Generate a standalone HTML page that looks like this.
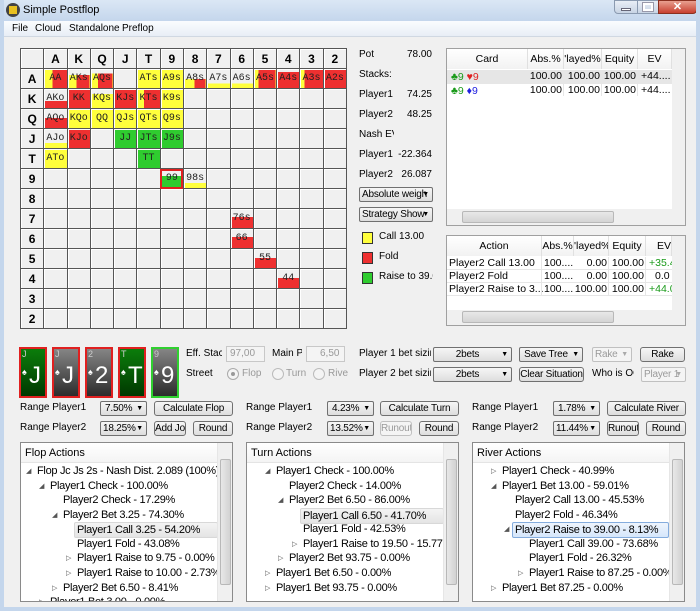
<!DOCTYPE html>
<html><head><meta charset="utf-8"><style>
*{box-sizing:border-box;margin:0;padding:0;white-space:nowrap}
body{width:700px;height:611px;overflow:hidden;background:#f0f0f0;font-family:"Liberation Sans",sans-serif;font-size:10px;color:#000;position:relative}
.a{position:absolute;white-space:nowrap}
.title{left:0;top:0;width:700px;height:21px;background:linear-gradient(#dbe7f5,#c4d6ec);}
.frame{left:0;top:0;width:700px;height:611px;border:4px solid #c4d6ec;border-top:none;}
.menu{left:4px;top:21px;width:692px;height:16px;background:linear-gradient(#fafcfe,#e8eef6);border-bottom:1px solid #d0d8e2}
table.g{position:absolute;left:20px;top:48px;width:327px;height:281px;border-collapse:collapse;table-layout:fixed;background:#f0f0f0}
table.g td{border:1px solid #555;box-shadow:inset 1px 1px 0 #fff;height:20px;text-align:center;font-family:"Liberation Mono",monospace;font-size:10px;color:#222;padding:0;overflow:hidden;white-space:nowrap}
table.g tr:first-child td,table.g td:first-child{font-family:"Liberation Sans",sans-serif;font-weight:bold;font-size:12px;color:#000}
.Y{background:#ffff3c}.R{background:#ee3030}.G{background:#2fcc2f}
.btn{position:absolute;height:15px;border:1px solid #707070;border-radius:3px;background:linear-gradient(#f6f6f6,#dddddd);text-align:center;line-height:13px;font-size:10px;overflow:hidden;letter-spacing:-0.2px}
.cmb{position:absolute;height:15px;border:1px solid #707070;border-radius:2px;background:linear-gradient(#f6f6f6,#dddddd);font-size:10px;line-height:13px;text-align:center;overflow:hidden;padding-right:10px;letter-spacing:-0.2px}
.cmb:after{content:"▼";position:absolute;right:3px;top:0;font-size:7px;color:#000}
.dis{color:#9a9a9a;border-color:#c0c0c0;background:#f4f4f4}
.dis:after{color:#aaa}
.tbl{position:absolute;background:#fff;border:1px solid #a0a0a0;overflow:hidden}
.hd{position:absolute;top:0;height:20px;line-height:20px;text-align:center;border-right:1px solid #e0e0e0;background:linear-gradient(#fff,#f2f2f2);font-size:10.5px;overflow:hidden}
.c{position:absolute;font-size:10.5px;text-align:right;overflow:hidden;border-right:1px solid #e6e6e6;padding-right:1px}
.t1{position:absolute;font-size:10.5px}
.card{position:absolute;top:347px;width:28px;height:51px;border:2px solid #e02020;color:#fff;overflow:hidden}
.card .s{position:absolute;left:1px;top:0;font-size:9px;color:#ccc}
.card .p{position:absolute;left:1px;top:18px;font-size:9px}
.card .b{position:absolute;left:8px;top:13px;font-size:24px;line-height:28px;font-family:"Liberation Sans",sans-serif}
.cg{background:linear-gradient(#0b7d0b,#003800)}
.cx{background:linear-gradient(#858585,#2c2c2c)}
.panel{position:absolute;top:442px;width:213px;height:160px;border:1px solid #8a8a8a;background:#fff;overflow:hidden}
.panel .h{position:absolute;left:0;top:0;width:198px;height:20px;line-height:20px;padding-left:4px;font-size:11px;border-bottom:1px solid #e4e4e4;background:linear-gradient(#fff,#f4f4f4)}
.sb{position:absolute;right:0;top:0;width:15px;height:158px;background:#f0f0f0;border-left:1px solid #e6e6e6}
.sb .t{position:absolute;left:2px;top:16px;width:11px;height:126px;border:1px solid #b8b8b8;border-radius:2px;background:linear-gradient(to right,#e8e8e8,#d2d2d2)}
.r{position:absolute;font-size:11px;line-height:14px;white-space:nowrap;letter-spacing:-0.3px}
.r i{font-style:normal;font-size:7px;color:#555;position:absolute;left:-11px;top:1px}
.sel{background:linear-gradient(#f4f4f4,#e4e4e4);border:1px solid #d8d8d8;border-radius:2px;padding:0 2px;margin-left:-3px}
.selb{background:linear-gradient(#eef5fd,#d6e7fb);border:1px solid #84acdd;border-radius:2px;padding:0 2px;margin-left:-3px}
</style></head><body>
<div class="a title"></div>
<div class="a" style="left:6px;top:3px;width:14px;height:14px;border-radius:7px;background:#444"></div>
<div class="a" style="left:9px;top:6px;width:8px;height:8px;background:#e8c020"></div>
<div class="a" style="left:23px;top:4px;font-size:11px">Simple Postflop</div>
<div class="a" style="left:614px;top:0;width:24px;height:14px;border:1px solid #8a9ab0;border-radius:0 0 0 4px;background:linear-gradient(#e8eef6,#c8d4e4)"></div>
<div class="a" style="left:621px;top:8px;width:10px;height:3px;background:#fff;border:1px solid #667"></div>
<div class="a" style="left:637px;top:0;width:22px;height:14px;border:1px solid #8a9ab0;background:linear-gradient(#e8eef6,#c8d4e4)"></div>
<div class="a" style="left:643px;top:3px;width:10px;height:8px;border:2px solid #fff;outline:1px solid #99a"></div>
<div class="a" style="left:658px;top:0;width:39px;height:14px;border:1px solid #8a3020;border-radius:0 0 4px 0;background:linear-gradient(#e8a090,#c84030);color:#fff;font-weight:bold;text-align:center;font-size:11px;line-height:13px">✕</div>
<div class="a frame"></div>
<div class="a menu"></div>
<div class="a" style="left:12px;top:23px">File</div>
<div class="a" style="left:35px;top:23px">Cloud</div>
<div class="a" style="left:69px;top:23px">Standalone</div>
<div class="a" style="left:122px;top:23px">Preflop</div>

<table class="g">
<tr><td></td><td>A</td><td>K</td><td>Q</td><td>J</td><td>T</td><td>9</td><td>8</td><td>7</td><td>6</td><td>5</td><td>4</td><td>3</td><td>2</td></tr>
<tr><td>A</td><td style="background:linear-gradient(to right,#ffff3c 35%,#ee3030 35%)">AA</td><td style="background:linear-gradient(#f0f0f0 30%,transparent 30%),linear-gradient(to right,#ffff3c 40%,#ee3030 40%)">AKs</td><td style="background:linear-gradient(#f0f0f0 20%,transparent 20%),linear-gradient(to right,#ffff3c 35%,#ee3030 35%)">AQs</td><td></td><td class="Y">ATs</td><td class="Y">A9s</td><td style="background:linear-gradient(#f0f0f0 50%,transparent 50%),linear-gradient(to right,#ffff3c 50%,#ee3030 50%)">A8s</td><td style="background:linear-gradient(#f0f0f0 75%,#ffff3c 75%)">A7s</td><td style="background:linear-gradient(#f0f0f0 75%,#ffff3c 75%)">A6s</td><td style="background:linear-gradient(to right,#ffff3c 22%,#ee3030 22%)">A5s</td><td style="background:linear-gradient(#f0f0f0 12%,#ee3030 12%)">A4s</td><td style="background:linear-gradient(to right,#ffff3c 18%,#ee3030 18%)">A3s</td><td class="R">A2s</td></tr>
<tr><td>K</td><td style="background:linear-gradient(#f0f0f0 60%,#ee3030 60%)">AKo</td><td class="R">KK</td><td style="background:linear-gradient(#f0f0f0 25%,#ffff3c 25%)">KQs</td><td class="R">KJs</td><td style="background:linear-gradient(to right,#ffff3c 28%,#ee3030 28%)">KTs</td><td class="Y">K9s</td><td></td><td></td><td></td><td></td><td></td><td></td><td></td></tr>
<tr><td>Q</td><td style="background:linear-gradient(#f0f0f0 45%,#ee3030 45%)">AQo</td><td class="Y">KQo</td><td class="Y">QQ</td><td class="Y">QJs</td><td class="Y">QTs</td><td class="Y">Q9s</td><td></td><td></td><td></td><td></td><td></td><td></td><td></td></tr>
<tr><td>J</td><td style="background:linear-gradient(#f0f0f0 70%,#ffff3c 70%)">AJo</td><td class="R">KJo</td><td></td><td class="G">JJ</td><td class="G">JTs</td><td class="G">J9s</td><td></td><td></td><td></td><td></td><td></td><td></td><td></td></tr>
<tr><td>T</td><td class="Y">ATo</td><td></td><td></td><td></td><td class="G">TT</td><td></td><td></td><td></td><td></td><td></td><td></td><td></td><td></td></tr>
<tr><td>9</td><td></td><td></td><td></td><td></td><td></td><td style="background:linear-gradient(#f0f0f0 35%,#2fcc2f 35%);outline:2px solid #e02020;outline-offset:-2px">99</td><td style="background:linear-gradient(#f0f0f0 70%,#ffff3c 70%)">98s</td><td></td><td></td><td></td><td></td><td></td><td></td></tr>
<tr><td>8</td><td></td><td></td><td></td><td></td><td></td><td></td><td></td><td></td><td></td><td></td><td></td><td></td><td></td></tr>
<tr><td>7</td><td></td><td></td><td></td><td></td><td></td><td></td><td></td><td></td><td style="background:linear-gradient(#f0f0f0 40%,#ee3030 40%)">76s</td><td></td><td></td><td></td><td></td></tr>
<tr><td>6</td><td></td><td></td><td></td><td></td><td></td><td></td><td></td><td></td><td style="background:linear-gradient(#f0f0f0 40%,#ee3030 40%)">66</td><td></td><td></td><td></td><td></td></tr>
<tr><td>5</td><td></td><td></td><td></td><td></td><td></td><td></td><td></td><td></td><td></td><td style="background:linear-gradient(#f0f0f0 45%,#ee3030 45%)">55</td><td></td><td></td><td></td></tr>
<tr><td>4</td><td></td><td></td><td></td><td></td><td></td><td></td><td></td><td></td><td></td><td></td><td style="background:linear-gradient(#f0f0f0 45%,#ee3030 45%)">44</td><td></td><td></td></tr>
<tr><td>3</td><td></td><td></td><td></td><td></td><td></td><td></td><td></td><td></td><td></td><td></td><td></td><td></td><td></td></tr>
<tr><td>2</td><td></td><td></td><td></td><td></td><td></td><td></td><td></td><td></td><td></td><td></td><td></td><td></td><td></td></tr>
</table>

<!-- stats -->
<div class="a" style="left:359px;top:49px">Pot</div><div class="a" style="left:380px;top:49px;width:52px;text-align:right">78.00</div>
<div class="a" style="left:359px;top:69px">Stacks:</div>
<div class="a" style="left:359px;top:89px">Player1</div><div class="a" style="left:380px;top:89px;width:52px;text-align:right">74.25</div>
<div class="a" style="left:359px;top:109px">Player2</div><div class="a" style="left:380px;top:109px;width:52px;text-align:right">48.25</div>
<div class="a" style="left:359px;top:129px;width:35px;overflow:hidden">Nash EVs</div>
<div class="a" style="left:359px;top:149px">Player1</div><div class="a" style="left:380px;top:149px;width:52px;text-align:right">-22.364</div>
<div class="a" style="left:359px;top:169px">Player2</div><div class="a" style="left:380px;top:169px;width:52px;text-align:right">26.087</div>
<div class="cmb" style="left:359px;top:187px;width:74px;text-align:left;padding-left:2px">Absolute weigh</div>
<div class="cmb" style="left:359px;top:207px;width:74px;text-align:left;padding-left:2px">Strategy Show</div>
<div class="a Y" style="left:362px;top:232px;width:11px;height:12px;border:1px solid #333"></div><div class="a" style="left:379px;top:231px">Call 13.00</div>
<div class="a R" style="left:362px;top:252px;width:11px;height:12px;border:1px solid #333"></div><div class="a" style="left:379px;top:251px">Fold</div>
<div class="a G" style="left:362px;top:272px;width:11px;height:12px;border:1px solid #333"></div><div class="a" style="left:379px;top:271px;width:54px;overflow:hidden">Raise to 39.00</div>

<!-- table 1 -->
<div class="tbl" style="left:446px;top:48px;width:240px;height:178px">
 <div class="hd" style="left:0;width:81px">Card</div>
 <div class="hd" style="left:81px;width:36px">Abs.%</div>
 <div class="hd" style="left:117px;width:38px">'layed%</div>
 <div class="hd" style="left:155px;width:36px">Equity</div>
 <div class="hd" style="left:191px;width:34px">EV</div>
 <div class="a" style="left:0;top:21px;width:225px;height:13px;background:#e6e6e6"></div>
 <div class="a" style="left:0;top:34px;width:225px;height:1px;background:#e6e6e6"></div>
 <div class="a" style="left:4px;top:22px;font-size:10.5px"><span style="color:#1a9a1a">♣9</span> <span style="color:#e02020">♥9</span></div>
 <div class="a" style="left:4px;top:36px;font-size:10.5px"><span style="color:#1a9a1a">♣9</span> <span style="color:#2020e0">♦9</span></div>
 <div class="c" style="left:81px;top:21px;width:36px">100.00</div><div class="c" style="left:117px;top:21px;width:38px">100.00</div><div class="c" style="left:155px;top:21px;width:36px">100.00</div><div class="t1" style="left:194px;top:21px">+44....</div>
 <div class="c" style="left:81px;top:35px;width:36px">100.00</div><div class="c" style="left:117px;top:35px;width:38px">100.00</div><div class="c" style="left:155px;top:35px;width:36px">100.00</div><div class="t1" style="left:194px;top:35px">+44....</div>
 <div class="a" style="left:225px;top:0;width:14px;height:160px;background:#f0f0f0"></div>
 <div class="a" style="left:0;top:160px;width:239px;height:16px;background:#f0f0f0"></div>
 <div class="a" style="left:15px;top:162px;width:152px;height:12px;border:1px solid #b8b8b8;border-radius:2px;background:linear-gradient(#e8e8e8,#d4d4d4)"></div>
</div>
<!-- table 2 -->
<div class="tbl" style="left:446px;top:235px;width:240px;height:91px">
 <div class="hd" style="left:0;width:95px">Action</div>
 <div class="hd" style="left:95px;width:32px">Abs.%</div>
 <div class="hd" style="left:127px;width:35px">'layed%</div>
 <div class="hd" style="left:162px;width:37px">Equity</div>
 <div class="hd" style="left:199px;width:26px;text-align:right">EV</div>
 <div class="t1" style="left:2px;top:21px">Player2 Call 13.00</div>
 <div class="t1" style="left:2px;top:34px">Player2 Fold</div>
 <div class="t1" style="left:2px;top:47px">Player2 Raise to 3...</div>
 <div class="a" style="left:0;top:33px;width:225px;height:1px;background:#e6e6e6"></div>
 <div class="a" style="left:0;top:46px;width:225px;height:1px;background:#e6e6e6"></div>
 <div class="a" style="left:0;top:59px;width:225px;height:1px;background:#e6e6e6"></div>
 <div class="a" style="left:94px;top:20px;width:1px;height:40px;background:#e6e6e6"></div>
 <div class="t1" style="left:97px;top:21px">100....</div><div class="c" style="left:127px;top:21px;width:35px">0.00</div><div class="c" style="left:162px;top:21px;width:37px">100.00</div><div class="t1" style="left:202px;top:21px;color:#1a9a1a;width:23px;overflow:hidden">+35.4</div>
 <div class="t1" style="left:97px;top:34px">100....</div><div class="c" style="left:127px;top:34px;width:35px">0.00</div><div class="c" style="left:162px;top:34px;width:37px">100.00</div><div class="t1" style="left:208px;top:34px;width:17px;overflow:hidden">0.0</div>
 <div class="t1" style="left:97px;top:47px">100....</div><div class="c" style="left:127px;top:47px;width:35px">100.00</div><div class="c" style="left:162px;top:47px;width:37px">100.00</div><div class="t1" style="left:202px;top:47px;color:#1a9a1a;width:23px;overflow:hidden">+44.0</div>
 <div class="a" style="left:225px;top:0;width:14px;height:74px;background:#f0f0f0"></div>
 <div class="a" style="left:0;top:74px;width:239px;height:15px;background:#f0f0f0"></div>
 <div class="a" style="left:15px;top:75px;width:152px;height:12px;border:1px solid #b8b8b8;border-radius:2px;background:linear-gradient(#e8e8e8,#d4d4d4)"></div>
</div>

<!-- cards -->
<div class="card cg" style="left:19px"><span class="s">J</span><span class="p">♠</span><span class="b">J</span></div>
<div class="card cx" style="left:52px"><span class="s">J</span><span class="p">♠</span><span class="b">J</span></div>
<div class="card cx" style="left:85px"><span class="s">2</span><span class="p">♠</span><span class="b">2</span></div>
<div class="card cg" style="left:118px"><span class="s">T</span><span class="p">♠</span><span class="b">T</span></div>
<div class="card cx" style="left:151px;border-color:#30d030"><span class="s">9</span><span class="p">♠</span><span class="b">9</span></div>

<div class="a" style="left:186px;top:348px;width:36px;overflow:hidden">Eff. Stack</div>
<div class="a" style="left:226px;top:346px;width:39px;height:16px;border:1px solid #c8c8c8;background:#f4f4f4;color:#999;padding-left:3px;line-height:14px">97,00</div>
<div class="a" style="left:272px;top:348px;width:30px;overflow:hidden">Main Pot</div>
<div class="a" style="left:306px;top:346px;width:39px;height:16px;border:1px solid #c8c8c8;background:#f4f4f4;color:#999;padding-left:13px;line-height:14px">6,50</div>
<div class="a" style="left:186px;top:368px">Street</div>
<div class="a" style="left:227px;top:368px;width:12px;height:12px;border:1px solid #aaa;border-radius:6px;background:#f4f4f4"></div><div class="a" style="left:231px;top:372px;width:4px;height:4px;border-radius:2px;background:#999"></div>
<div class="a" style="left:242px;top:368px;color:#999">Flop</div>
<div class="a" style="left:272px;top:368px;width:12px;height:12px;border:1px solid #bbb;border-radius:6px;background:#f4f4f4"></div><div class="a" style="left:286px;top:368px;color:#999">Turn</div>
<div class="a" style="left:313px;top:368px;width:12px;height:12px;border:1px solid #bbb;border-radius:6px;background:#f4f4f4"></div><div class="a" style="left:328px;top:368px;color:#999;width:20px;overflow:hidden">River</div>

<div class="a" style="left:359px;top:348px;width:72px;overflow:hidden">Player 1 bet sizing</div>
<div class="a" style="left:359px;top:368px;width:72px;overflow:hidden">Player 2 bet sizing</div>
<div class="cmb" style="left:433px;top:347px;width:79px">2bets</div>
<div class="cmb" style="left:433px;top:367px;width:79px">2bets</div>
<div class="cmb" style="left:519px;top:347px;width:64px">Save Tree</div>
<div class="btn" style="left:519px;top:367px;width:65px">Clear Situation</div>
<div class="cmb dis" style="left:592px;top:347px;width:40px;text-align:left;padding-left:2px">Rake</div>
<div class="a" style="left:592px;top:368px;width:42px;overflow:hidden">Who is OOP</div>
<div class="cmb dis" style="left:641px;top:367px;width:45px;text-align:left;padding-left:2px">Player 1</div>
<div class="btn" style="left:640px;top:347px;width:45px">Rake</div>

<!-- range rows -->
<div class="a" style="left:20px;top:402px">Range Player1</div>
<div class="a" style="left:20px;top:422px">Range Player2</div>
<div class="cmb" style="left:100px;top:401px;width:47px;text-align:left;padding-left:4px">7.50%</div>
<div class="cmb" style="left:100px;top:421px;width:47px;text-align:left;padding-left:2px">18.25%</div>
<div class="btn" style="left:154px;top:401px;width:79px">Calculate Flop</div>
<div class="btn" style="left:154px;top:421px;width:32px">Add Job</div>
<div class="btn" style="left:193px;top:421px;width:40px">Round</div>

<div class="a" style="left:246px;top:402px">Range Player1</div>
<div class="a" style="left:246px;top:422px">Range Player2</div>
<div class="cmb" style="left:327px;top:401px;width:47px;text-align:left;padding-left:4px">4.23%</div>
<div class="cmb" style="left:327px;top:421px;width:47px;text-align:left;padding-left:2px">13.52%</div>
<div class="btn" style="left:380px;top:401px;width:79px">Calculate Turn</div>
<div class="btn dis" style="left:380px;top:421px;width:32px">Runouts</div>
<div class="btn" style="left:419px;top:421px;width:40px">Round</div>

<div class="a" style="left:472px;top:402px">Range Player1</div>
<div class="a" style="left:472px;top:422px">Range Player2</div>
<div class="cmb" style="left:553px;top:401px;width:47px;text-align:left;padding-left:4px">1.78%</div>
<div class="cmb" style="left:553px;top:421px;width:47px;text-align:left;padding-left:2px">11.44%</div>
<div class="btn" style="left:607px;top:401px;width:79px">Calculate River</div>
<div class="btn" style="left:607px;top:421px;width:32px">Runouts</div>
<div class="btn" style="left:646px;top:421px;width:40px">Round</div>

<!-- trees -->
<div class="panel" style="left:20px">
 <div class="h">Flop Actions</div>
 <div class="r" style="left:16px;top:21px"><i>◢</i>Flop Jc Js 2s - Nash Dist. 2.089 (100%)</div>
 <div class="r" style="left:29px;top:36px"><i>◢</i>Player1 Check - 100.00%</div>
 <div class="r" style="left:42px;top:50px">Player2 Check - 17.29%</div>
 <div class="r" style="left:42px;top:65px"><i>◢</i>Player2 Bet 3.25 - 74.30%</div>
 <div class="r sel" style="left:56px;top:79px;width:144px">Player1 Call 3.25 - 54.20%</div>
 <div class="r" style="left:56px;top:94px">Player1 Fold - 43.08%</div>
 <div class="r" style="left:56px;top:108px"><i>▷</i>Player1 Raise to 9.75 - 0.00%</div>
 <div class="r" style="left:56px;top:123px"><i>▷</i>Player1 Raise to 10.00 - 2.73%</div>
 <div class="r" style="left:42px;top:138px"><i>▷</i>Player2 Bet 6.50 - 8.41%</div>
 <div class="r" style="left:29px;top:152px"><i>▷</i>Player1 Bet 3.00 - 0.00%</div>
 <div class="sb"><div class="t"></div></div>
</div>
<div class="panel" style="left:246px">
 <div class="h">Turn Actions</div>
 <div class="r" style="left:29px;top:21px"><i>◢</i>Player1 Check - 100.00%</div>
 <div class="r" style="left:42px;top:36px">Player2 Check - 14.00%</div>
 <div class="r" style="left:42px;top:50px"><i>◢</i>Player2 Bet 6.50 - 86.00%</div>
 <div class="r sel" style="left:56px;top:65px;width:144px">Player1 Call 6.50 - 41.70%</div>
 <div class="r" style="left:56px;top:79px">Player1 Fold - 42.53%</div>
 <div class="r" style="left:56px;top:94px"><i>▷</i>Player1 Raise to 19.50 - 15.77%</div>
 <div class="r" style="left:42px;top:108px"><i>▷</i>Player2 Bet 93.75 - 0.00%</div>
 <div class="r" style="left:29px;top:123px"><i>▷</i>Player1 Bet 6.50 - 0.00%</div>
 <div class="r" style="left:29px;top:138px"><i>▷</i>Player1 Bet 93.75 - 0.00%</div>
 <div class="sb"><div class="t"></div></div>
</div>
<div class="panel" style="left:472px">
 <div class="h">River Actions</div>
 <div class="r" style="left:29px;top:21px"><i>▷</i>Player1 Check - 40.99%</div>
 <div class="r" style="left:29px;top:36px"><i>◢</i>Player1 Bet 13.00 - 59.01%</div>
 <div class="r" style="left:42px;top:50px">Player2 Call 13.00 - 45.53%</div>
 <div class="r" style="left:42px;top:65px">Player2 Fold - 46.34%</div>
 <div class="r" style="left:42px;top:79px"><i>◢</i><span class="selb" style="display:inline-block;width:157px">Player2 Raise to 39.00 - 8.13%</span></div>
 <div class="r" style="left:56px;top:94px">Player1 Call 39.00 - 73.68%</div>
 <div class="r" style="left:56px;top:108px">Player1 Fold - 26.32%</div>
 <div class="r" style="left:56px;top:123px"><i>▷</i>Player1 Raise to 87.25 - 0.00%</div>
 <div class="r" style="left:29px;top:138px"><i>▷</i>Player1 Bet 87.25 - 0.00%</div>
 <div class="sb"><div class="t"></div></div>
</div>
</body></html>
